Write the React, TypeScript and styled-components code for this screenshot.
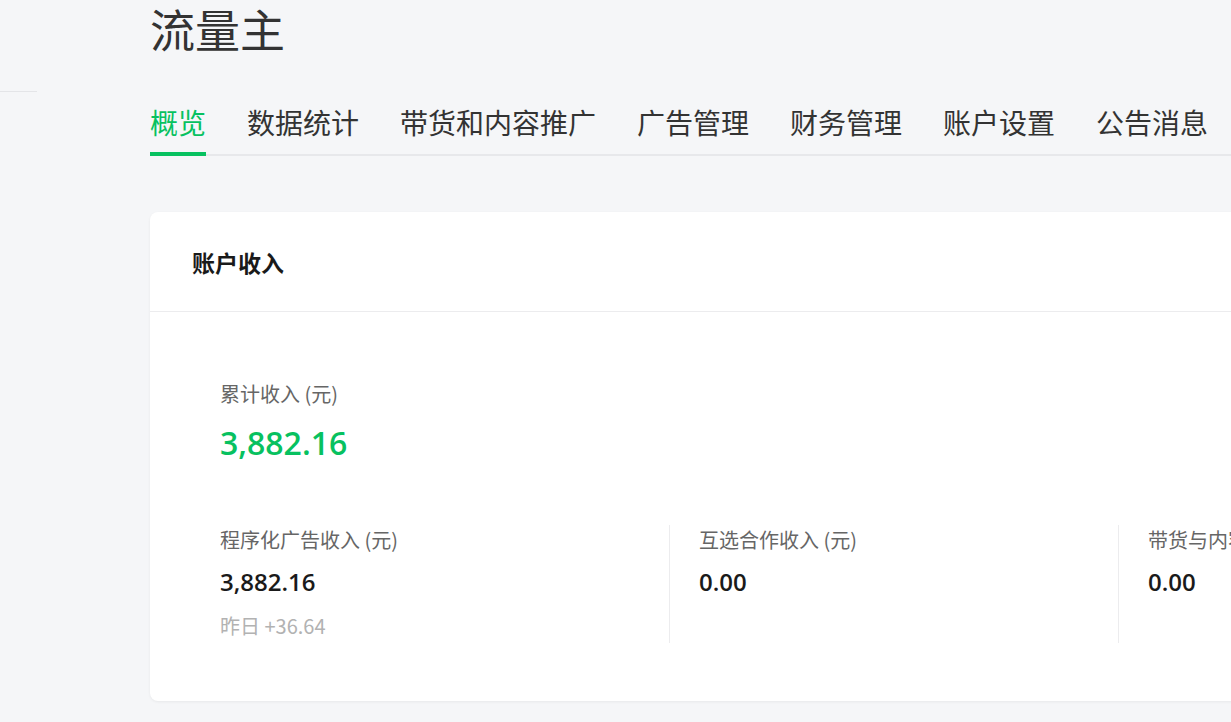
import React from 'react'
import styled, { createGlobalStyle } from 'styled-components'

const Global = createGlobalStyle`
  html, body {
    margin: 0;
    background: #f5f6f8;
    overflow: hidden;
    font-family: "Noto Sans CJK SC", "Open Sans", sans-serif;
  }
`

const Page = styled.div`
  display: flex;
  width: 1400px;
  height: 722px;
`

const Sidebar = styled.div`
  width: 37px;
  flex-shrink: 0;
  padding-top: 91px;
`

const SideLine = styled.div`
  height: 1px;
  background: #e4e5e8;
`

const Main = styled.div`
  margin-left: 113px;
  width: 1140px;
`

const Title = styled.h1`
  margin: 0;
  height: 62px;
  font-size: 45px;
  font-weight: 400;
  line-height: 58px;
  color: #333;
`

const Tabs = styled.div`
  display: flex;
  gap: 41px;
  margin-top: 40px;
  border-bottom: 2px solid #e7e8eb;
`

const Tab = styled.div<{ $active?: boolean }>`
  font-size: 28px;
  line-height: 40px;
  padding-bottom: 10px;
  margin-bottom: -2px;
  color: ${(p) => (p.$active ? '#07c160' : '#333')};
  border-bottom: 4px solid ${(p) => (p.$active ? '#07c160' : 'transparent')};
  white-space: nowrap;
`

const Card = styled.div`
  margin-top: 56px;
  background: #fff;
  border-radius: 8px;
  box-shadow: 0 1px 3px rgba(0, 0, 0, 0.06);
  height: 489px;
`

const CardHead = styled.div`
  height: 99px;
  display: flex;
  align-items: center;
  padding-left: 42px;
  border-bottom: 1px solid #ececee;
  font-size: 23px;
  font-weight: 700;
  color: #1a1a1a;
`

const CardBody = styled.div`
  padding: 67px 0 0 70px;
`

const Label = styled.div`
  font-size: 20px;
  line-height: 30px;
  color: #666;
  white-space: nowrap;
`

const Total = styled.div`
  font-family: "Open Sans", sans-serif;
  font-size: 32px;
  font-weight: 600;
  color: #07c160;
  line-height: 44px;
  margin-top: 12px;
`

const Columns = styled.div`
  display: flex;
  margin-top: 60px;
`

const Col = styled.div<{ $first?: boolean }>`
  width: 449px;
  flex-shrink: 0;
  box-sizing: border-box;
  padding-left: ${(p) => (p.$first ? '0' : '29px')};
  border-left: ${(p) => (p.$first ? 'none' : '1px solid #ececee')};
  height: 118px;
  overflow: hidden;
`

const Value = styled.div`
  font-family: "Open Sans", sans-serif;
  font-size: 24px;
  font-weight: 600;
  color: #1a1a1a;
  line-height: 34px;
  margin-top: 10px;
`

const Yesterday = styled.div`
  font-size: 20px;
  color: #b2b2b2;
  line-height: 30px;
  margin-top: 12px;
`

const tabs = ['概览', '数据统计', '带货和内容推广', '广告管理', '财务管理', '账户设置', '公告消息']

export default function App() {
  return (
    <Page>
      <Global />
      <Sidebar>
        <SideLine />
      </Sidebar>
      <Main>
        <Title>流量主</Title>
        <Tabs>
          {tabs.map((t, i) => (
            <Tab key={t} $active={i === 0}>
              {t}
            </Tab>
          ))}
        </Tabs>
        <Card>
          <CardHead>账户收入</CardHead>
          <CardBody>
            <Label>累计收入 (元)</Label>
            <Total>3,882.16</Total>
            <Columns>
              <Col $first>
                <Label>程序化广告收入 (元)</Label>
                <Value>3,882.16</Value>
                <Yesterday>昨日 +36.64</Yesterday>
              </Col>
              <Col>
                <Label>互选合作收入 (元)</Label>
                <Value>0.00</Value>
              </Col>
              <Col>
                <Label>带货与内容推广收入 (元)</Label>
                <Value>0.00</Value>
              </Col>
            </Columns>
          </CardBody>
        </Card>
      </Main>
    </Page>
  )
}
